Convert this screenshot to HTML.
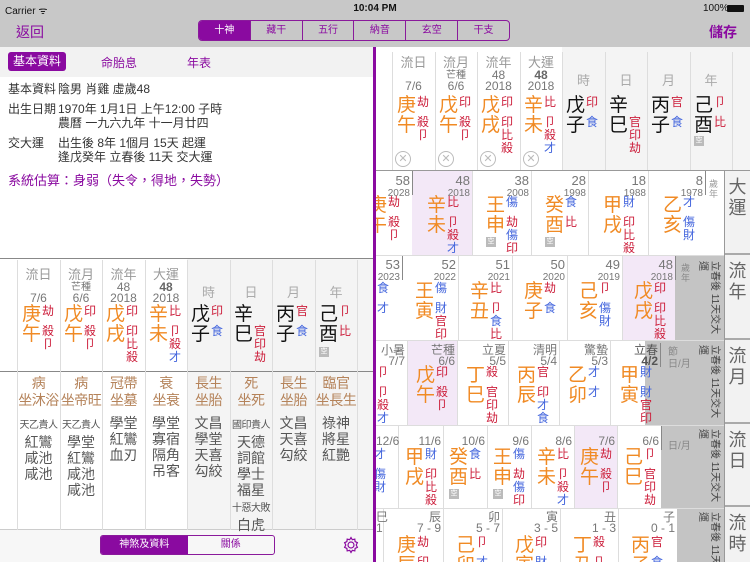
<!DOCTYPE html>
<html><head><meta charset="utf-8">
<style>
*{margin:0;padding:0;box-sizing:border-box}
html,body{background:#fff}
body{width:750px;height:562px;overflow:hidden;position:relative;font-family:"Liberation Sans","Noto Sans CJK TC",sans-serif;color:#333}
.a{position:absolute}
.p{position:absolute;display:flex}
.gz{font-size:19px;line-height:20px;color:#f08a24}
.gz.k{color:#111}
.an{font-size:12px;line-height:13px;margin-left:1px}
.an .s{height:20px}
.an i{display:block;font-style:normal}
.r{color:#cc1d3a}.b{color:#4466dd}
.hd{position:absolute;text-align:center;color:#999;font-size:12px;line-height:13px}
.nm{position:absolute;text-align:right;color:#777;font-size:12px;line-height:11px}
.nm small{font-size:10px}
.vl{position:absolute;width:1px;background:#ddd}
.hl{position:absolute;background:#f3e8f7}
.ky{position:absolute;width:10px;height:10px;background:#bbb;font-size:7px;color:#fff;text-align:center;line-height:10px}
.cx{position:absolute;width:16px;height:16px;border:1px solid #bbb;border-radius:50%;color:#bbb;font-size:11px;line-height:14px;text-align:center}
.tan{position:absolute;text-align:center;color:#b5835a;font-size:14px;line-height:17px;white-space:nowrap;letter-spacing:-0.5px}
.ss{position:absolute;text-align:center;color:#555;font-size:14px;line-height:16px;white-space:nowrap}
.ss span{letter-spacing:-0.5px}
.gr{position:absolute;background:#c4c4c4}
.vt{position:absolute;writing-mode:vertical-rl;text-orientation:sideways;font-size:10px;color:#444;line-height:12px;white-space:nowrap}
.lab{position:absolute;left:725px;width:25px;background:#f2f2f2;color:#666;font-size:18px;line-height:21px;text-align:center;border-bottom:2px solid #aaa;padding-top:6px}
</style></head><body>
<div class="a" style="left:0;top:0;width:750px;height:47px;background:#c8c8c8"></div>
<div class="a" style="left:5px;top:3px;font-size:10px;color:#111">Carrier ᯤ</div>
<div class="a" style="left:0;width:750px;top:3px;font-size:10px;font-weight:bold;text-align:center;color:#111">10:04 PM</div>
<div class="a" style="left:703px;top:3px;font-size:10px;color:#111">100%</div>
<div class="a" style="left:727px;top:5px;width:17px;height:7px;background:#111;border-radius:1px"></div>
<div class="a" style="left:16px;top:22px;font-size:14px;color:#8a0aa0">返回</div>
<div class="a" style="left:709px;top:22px;font-size:14px;font-weight:bold;color:#8a0aa0">儲存</div>
<div class="a" style="left:198px;top:20px;width:312px;height:21px;border:1px solid #8a1a9b;border-radius:4px;display:flex;overflow:hidden;font-size:10px;line-height:19px;text-align:center;color:#8a0aa0">
<div style="flex:1;background:#8a0aa0;color:#fff">十神</div><div style="flex:1;border-left:1px solid #8a1a9b">藏干</div><div style="flex:1;border-left:1px solid #8a1a9b">五行</div><div style="flex:1;border-left:1px solid #8a1a9b">納音</div><div style="flex:1;border-left:1px solid #8a1a9b">玄空</div><div style="flex:1;border-left:1px solid #8a1a9b">干支</div></div>

<div class="a" style="left:0;top:47px;width:373px;height:515px;background:#fff;overflow:hidden">
<div class="a" style="left:0;top:0;width:373px;height:30px;background:#f2f2f2"></div>
<div class="a" style="left:8px;top:5px;width:58px;height:19px;background:#8a0aa0;border-radius:3px;color:#fff;font-size:12px;line-height:19px;text-align:center">基本資料</div>
<div class="a" style="left:101px;top:7px;font-size:12px;color:#8a0aa0">命胎息</div>
<div class="a" style="left:187px;top:7px;font-size:12px;color:#8a0aa0">年表</div>
<div class="a" style="left:8px;top:35px;font-size:12px;line-height:14px;color:#333">基本資料</div>
<div class="a" style="left:58px;top:35px;font-size:12px;line-height:14px">陰男 肖雞 虛歲48</div>
<div class="a" style="left:8px;top:55px;font-size:12px;line-height:14px">出生日期</div>
<div class="a" style="left:58px;top:55px;font-size:12px;line-height:14px">1970年 1月1日 上午12:00 子時<br>農曆 一九六九年 十一月廿四</div>
<div class="a" style="left:8px;top:89px;font-size:12px;line-height:14px">交大運</div>
<div class="a" style="left:58px;top:89px;font-size:12px;line-height:14px">出生後 8年 1個月 15天 起運<br>逢戊癸年 立春後 11天 交大運</div>
<div class="a" style="left:8px;top:123px;font-size:13px;color:#8a0aa0">系統估算：身弱（失令，得地，失勢）</div>
<div class="a" style="left:0;top:211px;width:373px;height:1px;background:#888"></div>
<div class="a" style="left:187px;top:212px;width:186px;height:270px;background:#f4f4f4"></div>
<div class="a" style="left:0;top:324px;width:373px;height:1px;background:#888"></div>
<div class="a" style="left:0;top:482px;width:373px;height:33px;background:#f7f7f7;border-top:1px solid #ccc"></div>
</div>
<div class="vl" style="left:17px;top:260px;height:270px"></div>
<div class="vl" style="left:60px;top:260px;height:270px"></div>
<div class="vl" style="left:102px;top:260px;height:270px"></div>
<div class="vl" style="left:145px;top:260px;height:270px"></div>
<div class="vl" style="left:187px;top:260px;height:270px"></div>
<div class="vl" style="left:230px;top:260px;height:270px"></div>
<div class="vl" style="left:272px;top:260px;height:270px"></div>
<div class="vl" style="left:315px;top:260px;height:270px"></div>
<div class="vl" style="left:357px;top:260px;height:270px"></div>
<div class="hd" style="left:17px;width:43px;top:268px;font-size:13px">流日</div>
<div class="hd" style="left:17px;width:43px;top:292px;color:#777">7/6</div>
<div class="hd" style="left:60px;width:42px;top:268px;font-size:13px">流月</div>
<div class="hd" style="left:60px;width:42px;top:281px;font-size:10px;color:#777">芒種</div>
<div class="hd" style="left:60px;width:42px;top:292px;color:#777">6/6</div>
<div class="hd" style="left:102px;width:43px;top:268px;font-size:13px">流年</div>
<div class="hd" style="left:102px;width:43px;top:281px;color:#777">48</div>
<div class="hd" style="left:102px;width:43px;top:292px;color:#777">2018</div>
<div class="hd" style="left:145px;width:42px;top:268px;font-size:13px">大運</div>
<div class="hd" style="left:145px;width:42px;top:281px;color:#666;font-weight:bold">48</div>
<div class="hd" style="left:145px;width:42px;top:292px;color:#777">2018</div>
<div class="hd" style="left:187px;width:43px;top:286px;font-size:13px;color:#aaa">時</div>
<div class="hd" style="left:230px;width:42px;top:286px;font-size:13px;color:#aaa">日</div>
<div class="hd" style="left:272px;width:43px;top:286px;font-size:13px;color:#aaa">月</div>
<div class="hd" style="left:315px;width:42px;top:286px;font-size:13px;color:#aaa">年</div>
<div class="p" style="left:22px;top:305px"><div class="gz">庚<br>午</div><div class="an"><div class="s r">劫</div><i class="r">殺</i><i class="r">卩</i></div></div>
<div class="p" style="left:64px;top:305px"><div class="gz">戊<br>午</div><div class="an"><div class="s r">印</div><i class="r">殺</i><i class="r">卩</i></div></div>
<div class="p" style="left:106px;top:305px"><div class="gz">戊<br>戌</div><div class="an"><div class="s r">印</div><i class="r">印</i><i class="r">比</i><i class="r">殺</i></div></div>
<div class="p" style="left:149px;top:305px"><div class="gz">辛<br>未</div><div class="an"><div class="s r">比</div><i class="r">卩</i><i class="r">殺</i><i class="b">才</i></div></div>
<div class="p" style="left:191px;top:305px"><div class="gz k">戊<br>子</div><div class="an"><div class="s r">印</div><i class="b">食</i></div></div>
<div class="p" style="left:234px;top:305px"><div class="gz k">辛<br>巳</div><div class="an"><div class="s"></div><i class="r">官</i><i class="r">印</i><i class="r">劫</i></div></div>
<div class="p" style="left:276px;top:305px"><div class="gz k">丙<br>子</div><div class="an"><div class="s r">官</div><i class="b">食</i></div></div>
<div class="p" style="left:319px;top:305px"><div class="gz k">己<br>酉</div><div class="an"><div class="s r">卩</div><i class="r">比</i></div></div>
<div class="ky" style="left:319px;top:347px">空</div>
<div class="tan" style="left:17px;width:43px;top:375px">病<br>坐沐浴</div>
<div class="tan" style="left:60px;width:42px;top:375px">病<br>坐帝旺</div>
<div class="tan" style="left:102px;width:43px;top:375px">冠帶<br>坐墓</div>
<div class="tan" style="left:145px;width:42px;top:375px">衰<br>坐衰</div>
<div class="tan" style="left:187px;width:43px;top:375px">長生<br>坐胎</div>
<div class="tan" style="left:230px;width:42px;top:375px">死<br>坐死</div>
<div class="tan" style="left:272px;width:43px;top:375px">長生<br>坐胎</div>
<div class="tan" style="left:315px;width:42px;top:375px">臨官<br>坐長生</div>
<div class="ss" style="left:17px;width:43px;top:415px"><span style="font-size:10px">天乙貴人</span><br>紅鸞<br>咸池<br>咸池</div>
<div class="ss" style="left:60px;width:42px;top:415px"><span style="font-size:10px">天乙貴人</span><br>學堂<br>紅鸞<br>咸池<br>咸池</div>
<div class="ss" style="left:102px;width:43px;top:415px">學堂<br>紅鸞<br>血刃</div>
<div class="ss" style="left:145px;width:42px;top:415px">學堂<br>寡宿<br>隔角<br>吊客</div>
<div class="ss" style="left:187px;width:43px;top:415px">文昌<br>學堂<br>天喜<br>勾絞</div>
<div class="ss" style="left:230px;width:42px;top:415px"><span style="font-size:10px">國印貴人</span><br>天德<br>詞館<br>學士<br>福星<br><span style="font-size:10px">十惡大敗</span><br>白虎</div>
<div class="ss" style="left:272px;width:43px;top:415px">文昌<br>天喜<br>勾絞</div>
<div class="ss" style="left:315px;width:42px;top:415px">祿神<br>將星<br>紅艷</div>
<div class="a" style="left:100px;top:535px;width:175px;height:20px;border:1px solid #8a1a9b;border-radius:3px;display:flex;overflow:hidden;font-size:10px;line-height:18px;text-align:center;color:#8a0aa0"><div style="flex:1;background:#8a0aa0;color:#fff">神煞及資料</div><div style="flex:1">關係</div></div>
<svg class="a" style="left:342px;top:536px" width="18" height="18" viewBox="0 0 18 18"><circle cx="9" cy="9" r="3" fill="none" stroke="#8a0aa0" stroke-width="1.2"/><path d="M9 1.5l1.3 2.2 2.5-.6.3 2.5 2.3 1.1-1.2 2.3 1.2 2.3-2.3 1.1-.3 2.5-2.5-.6L9 16.5l-1.3-2.2-2.5.6-.3-2.5-2.3-1.1 1.2-2.3-1.2-2.3 2.3-1.1.3-2.5 2.5.6z" fill="none" stroke="#8a0aa0" stroke-width="1.2"/></svg>

<div class="a" style="left:373px;top:47px;width:3px;height:515px;background:#8a0aa0"></div>

<div class="a" style="left:376px;top:47px;width:374px;height:515px;background:#fff;overflow:hidden">
<div class="a" style="left:186px;top:0;width:188px;height:123px;background:#f4f4f4"></div>
<div class="a" style="left:0;top:123px;width:374px;height:1px;background:#999"></div>
</div>
<div class="vl" style="left:392px;top:52px;height:118px"></div>
<div class="vl" style="left:435px;top:52px;height:118px"></div>
<div class="vl" style="left:477px;top:52px;height:118px"></div>
<div class="vl" style="left:520px;top:52px;height:118px"></div>
<div class="vl" style="left:562px;top:52px;height:118px"></div>
<div class="vl" style="left:605px;top:52px;height:118px"></div>
<div class="vl" style="left:647px;top:52px;height:118px"></div>
<div class="vl" style="left:690px;top:52px;height:118px"></div>
<div class="vl" style="left:732px;top:52px;height:118px"></div>
<div class="hd" style="left:392px;width:43px;top:56px;font-size:13px">流日</div>
<div class="hd" style="left:392px;width:43px;top:80px;color:#777">7/6</div>
<div class="hd" style="left:435px;width:42px;top:56px;font-size:13px">流月</div>
<div class="hd" style="left:435px;width:42px;top:69px;font-size:10px;color:#777">芒種</div>
<div class="hd" style="left:435px;width:42px;top:80px;color:#777">6/6</div>
<div class="hd" style="left:477px;width:43px;top:56px;font-size:13px">流年</div>
<div class="hd" style="left:477px;width:43px;top:69px;color:#777">48</div>
<div class="hd" style="left:477px;width:43px;top:80px;color:#777">2018</div>
<div class="hd" style="left:520px;width:42px;top:56px;font-size:13px">大運</div>
<div class="hd" style="left:520px;width:42px;top:69px;color:#666;font-weight:bold">48</div>
<div class="hd" style="left:520px;width:42px;top:80px;color:#777">2018</div>
<div class="hd" style="left:562px;width:43px;top:74px;font-size:13px;color:#aaa">時</div>
<div class="hd" style="left:605px;width:42px;top:74px;font-size:13px;color:#aaa">日</div>
<div class="hd" style="left:647px;width:43px;top:74px;font-size:13px;color:#aaa">月</div>
<div class="hd" style="left:690px;width:42px;top:74px;font-size:13px;color:#aaa">年</div>
<div class="p" style="left:397px;top:96px"><div class="gz">庚<br>午</div><div class="an"><div class="s r">劫</div><i class="r">殺</i><i class="r">卩</i></div></div>
<div class="p" style="left:439px;top:96px"><div class="gz">戊<br>午</div><div class="an"><div class="s r">印</div><i class="r">殺</i><i class="r">卩</i></div></div>
<div class="p" style="left:481px;top:96px"><div class="gz">戊<br>戌</div><div class="an"><div class="s r">印</div><i class="r">印</i><i class="r">比</i><i class="r">殺</i></div></div>
<div class="p" style="left:524px;top:96px"><div class="gz">辛<br>未</div><div class="an"><div class="s r">比</div><i class="r">卩</i><i class="r">殺</i><i class="b">才</i></div></div>
<div class="p" style="left:566px;top:96px"><div class="gz k">戊<br>子</div><div class="an"><div class="s r">印</div><i class="b">食</i></div></div>
<div class="p" style="left:609px;top:96px"><div class="gz k">辛<br>巳</div><div class="an"><div class="s"></div><i class="r">官</i><i class="r">印</i><i class="r">劫</i></div></div>
<div class="p" style="left:651px;top:96px"><div class="gz k">丙<br>子</div><div class="an"><div class="s r">官</div><i class="b">食</i></div></div>
<div class="p" style="left:694px;top:96px"><div class="gz k">己<br>酉</div><div class="an"><div class="s r">卩</div><i class="r">比</i></div></div>
<div class="ky" style="left:694px;top:136px">空</div>
<div class="cx" style="left:395px;top:151px">✕</div>
<div class="cx" style="left:438px;top:151px">✕</div>
<div class="cx" style="left:480px;top:151px">✕</div>
<div class="cx" style="left:523px;top:151px">✕</div>

<div class="a" style="left:376px;top:171px;width:349px;height:391px;overflow:hidden;background:#fff">
<div class="hl" style="left:36px;top:0;width:60px;height:84px"></div>
<div class="vl" style="left:36px;top:0;background:#888;height:24px"></div>
<div class="vl" style="left:96px;top:0;height:84px"></div>
<div class="vl" style="left:155px;top:0;height:84px"></div>
<div class="vl" style="left:212px;top:0;height:84px"></div>
<div class="vl" style="left:272px;top:0;height:84px"></div>
<div class="vl" style="left:329px;top:0;height:24px;background:#888"></div>
<div class="a" style="left:0;top:84px;width:349px;height:1px;background:#ddd"></div>
<div class="nm" style="left:0;width:34px;top:4px;font-size:13px">58<br><small>2028</small></div>
<div class="nm" style="left:36px;width:58px;top:4px;font-size:13px">48<br><small>2018</small></div>
<div class="nm" style="left:96px;width:57px;top:4px;font-size:13px">38<br><small>2008</small></div>
<div class="nm" style="left:155px;width:55px;top:4px;font-size:13px">28<br><small>1998</small></div>
<div class="nm" style="left:212px;width:58px;top:4px;font-size:13px">18<br><small>1988</small></div>
<div class="nm" style="left:272px;width:55px;top:4px;font-size:13px">8<br><small>1978</small></div>
<div class="a" style="left:333px;top:8px;font-size:9px;line-height:10px;color:#999;width:10px">歲<br>年</div>
<div class="p" style="left:-8px;top:25px"><div class="gz">庚<br>午</div><div class="an"><div class="s r">劫</div><i class="r">殺</i><i class="r">卩</i></div></div>
<div class="p" style="left:51px;top:25px"><div class="gz">辛<br>未</div><div class="an"><div class="s r">比</div><i class="r">卩</i><i class="r">殺</i><i class="b">才</i></div></div>
<div class="p" style="left:110px;top:25px"><div class="gz">王<br>申</div><div class="an"><div class="s b">傷</div><i class="r">劫</i><i class="b">傷</i><i class="r">印</i></div></div>
<div class="ky" style="left:110px;top:66px">空</div>
<div class="p" style="left:169px;top:25px"><div class="gz">癸<br>酉</div><div class="an"><div class="s b">食</div><i class="r">比</i></div></div>
<div class="ky" style="left:169px;top:66px">空</div>
<div class="p" style="left:227px;top:25px"><div class="gz">甲<br>戌</div><div class="an"><div class="s b">財</div><i class="r">印</i><i class="r">比</i><i class="r">殺</i></div></div>
<div class="p" style="left:287px;top:25px"><div class="gz">乙<br>亥</div><div class="an"><div class="s b">才</div><i class="b">傷</i><i class="b">財</i></div></div>

<div class="hl" style="left:246px;top:85px;width:53px;height:84px"></div>
<div class="gr" style="left:299px;top:85px;width:50px;height:84px"></div>
<div class="vl" style="left:26px;top:85px;height:24px;background:#888"></div>
<div class="vl" style="left:82px;top:85px;height:84px"></div>
<div class="vl" style="left:136px;top:85px;height:84px"></div>
<div class="vl" style="left:191px;top:85px;height:84px"></div>
<div class="vl" style="left:246px;top:85px;height:84px"></div>
<div class="vl" style="left:299px;top:85px;height:24px;background:#888"></div>
<div class="a" style="left:0;top:169px;width:349px;height:1px;background:#ddd"></div>
<div class="nm" style="left:0;width:24px;top:88px;font-size:13px">53<br><small>2023</small></div>
<div class="nm" style="left:26px;width:54px;top:88px;font-size:13px">52<br><small>2022</small></div>
<div class="nm" style="left:82px;width:52px;top:88px;font-size:13px">51<br><small>2021</small></div>
<div class="nm" style="left:136px;width:53px;top:88px;font-size:13px">50<br><small>2020</small></div>
<div class="nm" style="left:191px;width:53px;top:88px;font-size:13px">49<br><small>2019</small></div>
<div class="nm" style="left:246px;width:51px;top:88px;font-size:13px">48<br><small>2018</small></div>
<div class="a" style="left:305px;top:92px;font-size:9px;line-height:10px;color:#888;width:10px">歲<br>年</div>
<div class="p" style="left:-19px;top:111px"><div class="gz">癸<br>卯</div><div class="an"><div class="s b">食</div><i class="b">才</i></div></div>
<div class="p" style="left:39px;top:111px"><div class="gz">王<br>寅</div><div class="an"><div class="s b">傷</div><i class="b">財</i><i class="r">官</i><i class="r">印</i></div></div>
<div class="p" style="left:94px;top:111px"><div class="gz">辛<br>丑</div><div class="an"><div class="s r">比</div><i class="r">卩</i><i class="b">食</i><i class="r">比</i></div></div>
<div class="p" style="left:148px;top:111px"><div class="gz">庚<br>子</div><div class="an"><div class="s r">劫</div><i class="b">食</i></div></div>
<div class="p" style="left:203px;top:111px"><div class="gz">己<br>亥</div><div class="an"><div class="s r">卩</div><i class="b">傷</i><i class="b">財</i></div></div>
<div class="p" style="left:258px;top:111px"><div class="gz">戊<br>戌</div><div class="an"><div class="s r">印</div><i class="r">印</i><i class="r">比</i><i class="r">殺</i></div></div>

<div class="hl" style="left:31px;top:170px;width:50px;height:84px"></div>
<div class="gr" style="left:269px;top:170px;width:80px;height:84px"></div>
<div class="vl" style="left:31px;top:170px;height:84px"></div>
<div class="vl" style="left:81px;top:170px;height:84px"></div>
<div class="vl" style="left:132px;top:170px;height:84px"></div>
<div class="vl" style="left:183px;top:170px;height:84px"></div>
<div class="vl" style="left:234px;top:170px;height:84px"></div>
<div class="vl" style="left:284px;top:172px;height:24px;background:#888"></div>
<div class="a" style="left:0;top:254px;width:349px;height:1px;background:#ddd"></div>
<div class="nm" style="left:0;width:29px;top:174px">小暑<br>7/7</div>
<div class="nm" style="left:31px;width:48px;top:174px">芒種<br>6/6</div>
<div class="nm" style="left:81px;width:49px;top:174px">立夏<br>5/5</div>
<div class="nm" style="left:132px;width:49px;top:174px">清明<br>5/4</div>
<div class="nm" style="left:183px;width:49px;top:174px">驚蟄<br>5/3</div>
<div class="nm" style="left:234px;width:48px;top:174px;color:#555">立春<br><b>4/2</b></div>
<div class="a" style="left:292px;top:176px;font-size:10px;line-height:12px;color:#888">節<br>日/月</div>
<div class="p" style="left:-19px;top:195px"><div class="gz">己<br>未</div><div class="an"><div class="s r">卩</div><i class="r">卩</i><i class="r">殺</i><i class="b">才</i></div></div>
<div class="p" style="left:40px;top:195px"><div class="gz">戊<br>午</div><div class="an"><div class="s r">印</div><i class="r">殺</i><i class="r">卩</i></div></div>
<div class="p" style="left:90px;top:195px"><div class="gz">丁<br>巳</div><div class="an"><div class="s r">殺</div><i class="r">官</i><i class="r">印</i><i class="r">劫</i></div></div>
<div class="p" style="left:141px;top:195px"><div class="gz">丙<br>辰</div><div class="an"><div class="s r">官</div><i class="r">印</i><i class="b">才</i><i class="b">食</i></div></div>
<div class="p" style="left:192px;top:195px"><div class="gz">乙<br>卯</div><div class="an"><div class="s b">才</div><i class="b">才</i></div></div>
<div class="p" style="left:244px;top:195px"><div class="gz">甲<br>寅</div><div class="an"><div class="s b">財</div><i class="b">財</i><i class="r">官</i><i class="r">印</i></div></div>

<div class="hl" style="left:198px;top:255px;width:43px;height:82px"></div>
<div class="gr" style="left:285px;top:255px;width:64px;height:82px"></div>
<div class="vl" style="left:22px;top:255px;height:82px"></div>
<div class="vl" style="left:67px;top:255px;height:82px"></div>
<div class="vl" style="left:111px;top:255px;height:82px"></div>
<div class="vl" style="left:155px;top:255px;height:82px"></div>
<div class="vl" style="left:198px;top:255px;height:82px"></div>
<div class="vl" style="left:241px;top:255px;height:82px"></div>
<div class="vl" style="left:285px;top:255px;height:24px;background:#888"></div>
<div class="a" style="left:0;top:337px;width:349px;height:1px;background:#ddd"></div>
<div class="nm" style="left:0;width:20px;top:265px">12/6</div>
<div class="nm" style="left:22px;width:43px;top:265px">11/6</div>
<div class="nm" style="left:67px;width:42px;top:265px">10/6</div>
<div class="nm" style="left:111px;width:42px;top:265px">9/6</div>
<div class="nm" style="left:155px;width:41px;top:265px">8/6</div>
<div class="nm" style="left:198px;width:41px;top:265px">7/6</div>
<div class="nm" style="left:241px;width:42px;top:265px">6/6</div>
<div class="a" style="left:292px;top:266px;font-size:10px;color:#888">日/月</div>
<div class="p" style="left:-22px;top:277px"><div class="gz">乙<br>亥</div><div class="an"><div class="s b">才</div><i class="b">傷</i><i class="b">財</i></div></div>
<div class="p" style="left:29px;top:277px"><div class="gz">甲<br>戌</div><div class="an"><div class="s b">財</div><i class="r">印</i><i class="r">比</i><i class="r">殺</i></div></div>
<div class="p" style="left:73px;top:277px"><div class="gz">癸<br>酉</div><div class="an"><div class="s b">食</div><i class="r">比</i></div></div>
<div class="ky" style="left:73px;top:318px">空</div>
<div class="p" style="left:117px;top:277px"><div class="gz">王<br>申</div><div class="an"><div class="s b">傷</div><i class="r">劫</i><i class="b">傷</i><i class="r">印</i></div></div>
<div class="ky" style="left:117px;top:318px">空</div>
<div class="p" style="left:161px;top:277px"><div class="gz">辛<br>未</div><div class="an"><div class="s r">比</div><i class="r">卩</i><i class="r">殺</i><i class="b">才</i></div></div>
<div class="p" style="left:204px;top:277px"><div class="gz">庚<br>午</div><div class="an"><div class="s r">劫</div><i class="r">殺</i><i class="r">卩</i></div></div>
<div class="p" style="left:248px;top:277px"><div class="gz">己<br>巳</div><div class="an"><div class="s r">卩</div><i class="r">官</i><i class="r">印</i><i class="r">劫</i></div></div>

<div class="gr" style="left:301px;top:338px;width:48px;height:60px"></div>
<div class="vl" style="left:7px;top:338px;height:60px"></div>
<div class="vl" style="left:67px;top:338px;height:60px"></div>
<div class="vl" style="left:126px;top:338px;height:60px"></div>
<div class="vl" style="left:184px;top:338px;height:60px"></div>
<div class="vl" style="left:242px;top:338px;height:60px"></div>
<div class="nm" style="left:0;width:5px;top:341px">巳<br>1</div>
<div class="nm" style="left:7px;width:58px;top:341px">辰<br>7 - 9</div>
<div class="nm" style="left:67px;width:57px;top:341px">卯<br>5 - 7</div>
<div class="nm" style="left:126px;width:56px;top:341px">寅<br>3 - 5</div>
<div class="nm" style="left:184px;width:56px;top:341px">丑<br>1 - 3</div>
<div class="nm" style="left:242px;width:57px;top:341px">子<br>0 - 1</div>
<div class="p" style="left:21px;top:365px"><div class="gz">庚<br>辰</div><div class="an"><div class="s r">劫</div><i class="r">印</i></div></div>
<div class="p" style="left:80px;top:365px"><div class="gz">己<br>卯</div><div class="an"><div class="s r">卩</div><i class="b">才</i></div></div>
<div class="p" style="left:139px;top:365px"><div class="gz">戊<br>寅</div><div class="an"><div class="s r">印</div><i class="b">財</i></div></div>
<div class="p" style="left:197px;top:365px"><div class="gz">丁<br>丑</div><div class="an"><div class="s r">殺</div><i class="r">卩</i></div></div>
<div class="p" style="left:255px;top:365px"><div class="gz">丙<br>子</div><div class="an"><div class="s r">官</div><i class="b">食</i></div></div>

<div class="vt" style="left:332px;top:90px">立春後 11天交大</div><div class="vt" style="left:320px;top:90px">運</div>
<div class="vt" style="left:332px;top:174px">立春後 11天交大</div><div class="vt" style="left:320px;top:174px">運</div>
<div class="vt" style="left:332px;top:258px">立春後 11天交大</div><div class="vt" style="left:320px;top:258px">運</div>
<div class="vt" style="left:332px;top:341px">立春後 11天交大</div><div class="vt" style="left:320px;top:341px">運</div>
</div>
<div class="vl" style="left:724px;top:171px;height:391px;background:#999"></div>
<div class="lab" style="top:171px;height:84px">大<br>運</div>
<div class="lab" style="top:255px;height:85px">流<br>年</div>
<div class="lab" style="top:340px;height:84px">流<br>月</div>
<div class="lab" style="top:424px;height:83px">流<br>日</div>
<div class="lab" style="top:507px;height:55px;border-bottom:none">流<br>時</div>
</body></html>
